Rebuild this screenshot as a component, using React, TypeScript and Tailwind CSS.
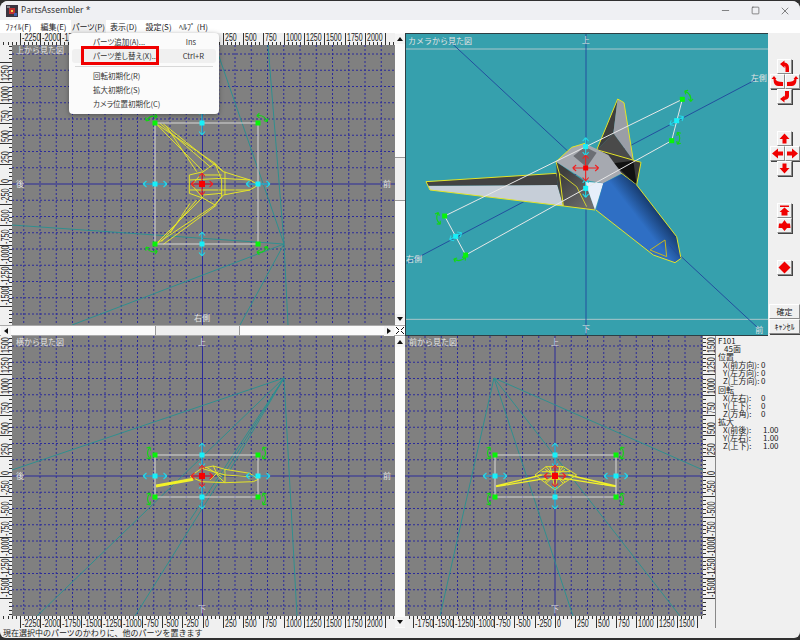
import { Minus, Square, X } from 'lucide-react';
import type { ReactNode } from 'react';

const UNIT = 0.08125; // px per model unit
const GRID = 16.25;

const LINE = '#2b2b9a';
const TEAL = '#2f8f8f';
const YELLOW = '#e4e428';

function steps(from: number, to: number, step: number) {
  const out: number[] = [];
  const start = Math.ceil(from / step);
  for (let i = start; i * step <= to; i++) out.push(i * step);
  return out;
}

function Ruler({ side, length, center }: { side: 'top' | 'bottom' | 'left' | 'right'; length: number; center: number }) {
  const horizontal = side === 'top' || side === 'bottom';
  const thick = side === 'right' ? 13 : 12;
  const list = horizontal
    ? steps(-center / UNIT, (length - center) / UNIT, 50)
    : steps(-(length - center) / UNIT, center / UNIT, 50);
  return (
    <svg width={horizontal ? length : thick} height={horizontal ? thick : length} className="block shrink-0">
      {list.map((v) => {
        const major = v % 250 === 0;
        const p = Math.round(horizontal ? center + v * UNIT : center - v * UNIT) + 0.5;
        const small = 3;
        const textLen = String(v).replace('-', '').length * 3.9 + (v < 0 ? 3 : 0);
        if (horizontal) {
          const y1 = major ? 0 : side === 'top' ? thick - small : 0;
          const y2 = major ? thick : side === 'top' ? thick : small;
          return (
            <g key={v}>
              <line x1={p} x2={p} y1={y1} y2={y2} stroke="#333" />
              {major && p + textLen + 2 < length && (
                <text
                  x={p + 1.5}
                  y={side === 'top' ? 8 : 10.5}
                  fontSize="10"
                  fill="#222"
                  textLength={textLen}
                  lengthAdjust="spacingAndGlyphs"
                  fontFamily="'Liberation Sans', sans-serif"
                >
                  {v}
                </text>
              )}
            </g>
          );
        }
        const x1 = major ? 0 : side === 'left' ? thick - small : 0;
        const x2 = major ? thick : side === 'left' ? thick : small;
        const tx = side === 'left' ? 9 : 12;
        return (
          <g key={v}>
            <line x1={x1} x2={x2} y1={p} y2={p} stroke="#333" />
            {major && p - textLen - 2 > 0 && (
              <text
                x={tx}
                y={p - 1.5}
                fontSize="10"
                fill="#222"
                textLength={textLen}
                lengthAdjust="spacingAndGlyphs"
                fontFamily="'Liberation Sans', sans-serif"
                transform={`rotate(-90 ${tx} ${p - 1.5})`}
              >
                {v}
              </text>
            )}
          </g>
        );
      })}
      {side === 'right' && <line x1={12.5} x2={12.5} y1={0} y2={length} stroke="#888" />}
    </svg>
  );
}

function Canvas({ x, y, w, h, cx, cy, children }: { x: number; y: number; w: number; h: number; cx: number; cy: number; children: ReactNode }) {
  const vs = steps(x - cx, x + w - cx, GRID).filter((v) => v !== 0);
  const hs = steps(y - cy, y + h - cy, GRID).filter((v) => v !== 0);
  return (
    <svg width={w} height={h} viewBox={`${x} ${y} ${w} ${h}`} className="block shrink-0 bg-[#808080]">
      {vs.map((v) => (
        <line key={v} x1={cx + v} x2={cx + v} y1={y} y2={y + h} stroke={LINE} strokeDasharray="2 2" />
      ))}
      {hs.map((v) => (
        <line key={v} x1={x} x2={x + w} y1={cy + v} y2={cy + v} stroke={LINE} strokeDasharray="2 2" />
      ))}
      <line x1={cx} x2={cx} y1={y} y2={y + h} stroke={LINE} />
      <line x1={x} x2={x + w} y1={cy} y2={cy} stroke={LINE} />
      {children}
    </svg>
  );
}

function Label({ x, y, children }: { x: number; y: number; children: ReactNode }) {
  return (
    <text x={x} y={y} fontSize="8" fill="#e2e2e2">
      {children}
    </text>
  );
}

function Teal({ from, to }: { from: [number, number]; to: [number, number][] }) {
  return (
    <g stroke={TEAL} fill="none">
      {to.map((p, i) => (
        <line key={i} x1={from[0]} y1={from[1]} x2={p[0]} y2={p[1]} />
      ))}
    </g>
  );
}

function DoubleArrow({ x, y, angle, color, size = 12 }: { x: number; y: number; angle: number; color: string; size?: number }) {
  return (
    <g transform={`translate(${x} ${y}) rotate(${angle})`} stroke={color} fill="none" strokeWidth="1.1">
      <path d={`M${-size} 0H${size}M${-size} 0l3.5 -3M${-size} 0l3.5 3M${size} 0l-3.5 -3M${size} 0l-3.5 3`} />
    </g>
  );
}

function Arc({ x, y, angle }: { x: number; y: number; angle: number }) {
  return (
    <g transform={`translate(${x} ${y}) rotate(${angle})`} stroke="#12d812" fill="none" strokeWidth="1.1">
      <path d="M-6 2Q0 -3 6 2M-6 2l1 -3.5M-6 2l3.5 .5M6 2l-1 -3.5M6 2l-3.5 .5" />
    </g>
  );
}

function Dot({ x, y, color, size = 5 }: { x: number; y: number; color: string; size?: number }) {
  return <rect x={x - size / 2} y={y - size / 2} width={size} height={size} fill={color} />;
}

function Gizmo({ l, r, t, b, cx, cy, vertical }: { l: number; r: number; t: number; b: number; cx: number; cy: number; vertical?: boolean }) {
  return (
    <g>
      <rect x={l} y={t} width={r - l} height={b - t} fill="none" stroke="#d8d8d8" strokeWidth="1" />
      <DoubleArrow x={l} y={cy} angle={0} color="#22d8e8" />
      <DoubleArrow x={r} y={cy} angle={0} color="#22d8e8" />
      <DoubleArrow x={cx} y={t} angle={90} color="#22d8e8" />
      <DoubleArrow x={cx} y={b} angle={90} color="#22d8e8" />
      {vertical ? (
        <>
          <Arc x={l - 7} y={t - 2} angle={-90} />
          <Arc x={l - 7} y={b + 2} angle={-90} />
          <Arc x={r + 7} y={t - 2} angle={90} />
          <Arc x={r + 7} y={b + 2} angle={90} />
        </>
      ) : (
        <>
          <Arc x={l - 4} y={t - 6} angle={-20} />
          <Arc x={r + 5} y={t - 6} angle={30} />
          <Arc x={l - 4} y={b + 7} angle={200} />
          <Arc x={r + 5} y={b + 7} angle={150} />
        </>
      )}
      <Dot x={l} y={t} color="#08f408" />
      <Dot x={r} y={t} color="#08f408" />
      <Dot x={l} y={b} color="#08f408" />
      <Dot x={r} y={b} color="#08f408" />
      <Dot x={l} y={cy} color="#18f0f8" />
      <Dot x={r} y={cy} color="#18f0f8" />
      <Dot x={cx} y={t} color="#18f0f8" />
      <Dot x={cx} y={b} color="#18f0f8" />
    </g>
  );
}

function Center({ x, y }: { x: number; y: number }) {
  return (
    <g>
      <DoubleArrow x={x} y={y} angle={0} color="#f02020" size={11} />
      <DoubleArrow x={x} y={y} angle={90} color="#f02020" size={11} />
      <Dot x={x} y={y} color="#f80000" size={6} />
    </g>
  );
}

function TopWire() {
  return (
    <g transform="translate(120 100) scale(.3333)" fill="none" stroke={YELLOW} strokeWidth="3">
      <path d="M107 70L285 190M130 72L310 215M107 70L250 215M120 70L270 200M140 80L230 215" />
      <path d="M107 433L250 290M130 433L290 315M107 433L285 315M150 400L210 310M125 425L230 300" />
      <path d="M208 225L250 215L285 190L310 215L390 240L415 255L390 270L310 285L285 315L250 295L208 280Z" />
      <path d="M285 190L305 240L305 290L285 315M210 240L305 235L390 240M210 270L305 270L390 270M315 215V285M250 215L215 255L250 295M250 225L305 225M250 285L305 280" />
    </g>
  );
}

function SideWire() {
  return (
    <g transform="translate(130 430) scale(.3333)" fill="none" stroke={YELLOW} strokeWidth="3">
      <path d="M78 170L190 150M78 166L190 146M78 168L190 148" strokeWidth="5" stroke="#f2f228" />
      <path d="M180 140L215 115L250 108L285 118L360 130L385 148L370 155L285 158L215 155Z" />
      <path d="M250 108L265 140L285 158V130L285 118M215 115L285 135L360 140M265 125L240 150M230 112L275 140" />
    </g>
  );
}

function FrontWire() {
  return (
    <g transform="translate(470 430) scale(.3333)" fill="none" stroke={YELLOW} strokeWidth="3">
      <path d="M78 168L215 135M78 170L230 145M438 168L295 135M438 170L280 145" strokeWidth="4" stroke="#f2f228" />
      <path d="M195 135L228 110L280 110L320 135L280 160L255 180L228 160Z" />
      <path d="M228 110L255 140L280 110M228 160L255 135L280 160M215 125H300M215 148H295M240 110L255 175M270 110L255 175M205 135H310M225 118L285 155M285 118L225 155" />
    </g>
  );
}

function CameraView() {
  const mark = (x: number, y: number, c: string, s = 5) => (
    <rect x={x - (s * 3) / 2} y={y - (s * 3) / 2} width={s * 3} height={s * 3} fill={c} />
  );
  const arrow = (x: number, y: number, a: number, c: string, s = 11) => (
    <g transform="scale(3)" key={`${x}-${y}-${a}`}>
      <DoubleArrow x={x / 3} y={y / 3} angle={a} color={c} size={s} />
    </g>
  );
  const arc = (x: number, y: number, a: number) => (
    <g transform="scale(3)" key={`a${x}-${y}`}>
      <Arc x={x / 3} y={y / 3} angle={a} />
    </g>
  );
  return (
    <svg width={362} height={301} viewBox="18 12 1086 903" className="block bg-[#36a0ad]">
      <defs>
        <linearGradient id="nose" gradientUnits="userSpaceOnUse" x1="640" y1="610" x2="775" y2="505">
          <stop offset="0" stopColor="#2f6fc4" />
          <stop offset="0.5" stopColor="#2f6fc4" />
          <stop offset="1" stopColor="#0c2448" />
        </linearGradient>
        <linearGradient id="side" gradientUnits="userSpaceOnUse" x1="480" y1="440" x2="570" y2="530">
          <stop offset="0" stopColor="#3e3e3e" />
          <stop offset="1" stopColor="#6e6e6e" />
        </linearGradient>
      </defs>
      <line x1="18" x2="1104" y1="57" y2="57" stroke="#a9c6cb" strokeWidth="3" />
      <line x1="18" x2="1104" y1="868" y2="868" stroke="#a9c6cb" strokeWidth="3" />
      <g stroke="#234f9e" strokeWidth="3" fill="none">
        <line x1="558" y1="12" x2="558" y2="915" />
        <line x1="145" y1="30" x2="1075" y2="895" />
        <line x1="20" y1="700" x2="1065" y2="150" />
      </g>
      {/* tail fin */}
      <path d="M653 207L640 310L590 360Z" fill="#3e3e3e" />
      <path d="M653 207L672 218L700 392L640 310Z" fill="#9a9ea6" />
      <path d="M640 310L700 392L590 360Z" fill="#4a4a4a" />
      <path d="M590 360L653 207L672 218L700 392" fill="none" stroke={YELLOW} strokeWidth="3" />
      {/* small fin */}
      <path d="M565 352L723 397L710 465L625 400Z" fill="#3b3b3b" />
      <path d="M640 400L700 392L710 465Z" fill="#111" />
      <path d="M565 352L723 397L710 465L625 400Z" fill="none" stroke={YELLOW} strokeWidth="3" />
      {/* wing */}
      <path d="M85 467L472 465L490 528L90 480Z" fill="#c6ced8" />
      <path d="M78 455L470 430L472 465L85 467Z" fill="#424242" />
      <path d="M78 455L470 430L490 528L90 480Z" fill="none" stroke={YELLOW} strokeWidth="3" />
      {/* body side */}
      <path d="M468 395L555 455L585 540L490 528L472 465Z" fill="url(#side)" />
      <path d="M478 430L530 470L560 530" fill="none" stroke={YELLOW} strokeWidth="2.5" />
      {/* roof */}
      <path d="M468 395L515 352L555 340L625 375L665 430L610 460L555 450Z" fill="#a6a9b0" />
      <path d="M520 378L555 350L590 368L560 412Z" fill="#6c6e74" />
      {/* windshield */}
      <path d="M555 455L610 460L585 540Z" fill="#e6eefa" />
      {/* nose */}
      <path d="M610 460L665 432L710 465L830 620L843 685L825 698L760 675L588 540Z" fill="url(#nose)" />
      <path d="M710 465L830 620L843 685L825 698L760 675L588 540" fill="none" stroke={YELLOW} strokeWidth="3" />
      <path d="M468 395L515 352L555 340" fill="none" stroke={YELLOW} strokeWidth="3" />
      <path d="M468 395L478 430L490 528L585 540" fill="none" stroke={YELLOW} strokeWidth="3" />
      <path d="M750 660L795 630L800 680Z" fill="none" stroke="#c8b820" strokeWidth="3" />
      <line x1="808" y1="645" x2="843" y2="685" stroke="#234f9e" strokeWidth="3" />
      {/* handle frame */}
      <g stroke="#e8e8e8" strokeWidth="3" fill="none">
        <path d="M134 558L847 208L815 332L197 675Z" />
      </g>
      {arrow(167, 619, -30, '#22d8e8', 7)}
      {arrow(830, 272, -30, '#22d8e8', 8)}
      {arrow(557, 350, 90, '#22d8e8', 9)}
      {arrow(557, 475, 90, '#22d8e8', 9)}
      {arc(112, 566, -100)}
      {arc(180, 690, 170)}
      {arc(868, 196, 60)}
      {arc(838, 325, 90)}
      {mark(134, 558, '#08f408')}
      {mark(847, 208, '#08f408')}
      {mark(815, 332, '#08f408')}
      {mark(197, 675, '#08f408')}
      {mark(167, 619, '#18f0f8')}
      {mark(830, 272, '#18f0f8')}
      {mark(557, 350, '#18f0f8')}
      {mark(557, 475, '#18f0f8')}
      {arrow(557, 414, 0, '#f02020', 13)}
      {arrow(557, 414, 90, '#f02020', 13)}
      {mark(557, 414, '#f80000')}
      <g fontSize="24" fill="#e4e4e4">
        <text x="24" y="41">カメラから見た図</text>
        <text x="545" y="38">上</text>
        <text x="1052" y="153">左側</text>
        <text x="18" y="696">右側</text>
        <text x="546" y="906">下</text>
        <text x="1066" y="908">前</text>
      </g>
    </svg>
  );
}

const btnBase = 'relative flex items-center justify-center border border-t-white border-l-white border-r-[#8a8a8a] border-b-[#8a8a8a] bg-[#f0f0f0] shadow-[1px_1px_0_#444]';

function ArrowBtn({ d }: { d: string }) {
  return (
    <button className={`${btnBase} h-[15px] w-[15px]`}>
      <svg width="13" height="13" viewBox="0 0 13 13" className="shrink-0">
        <path d={d} fill="#f00000" />
      </svg>
    </button>
  );
}

function Sidebar() {
  return (
    <div className="flex w-[33px] flex-col items-center bg-[#f0f0f0] pl-px">
      <div className="mt-[26px] flex flex-col items-center">
        <ArrowBtn d="M2 4L6.5 .5V2.5Q11 3 11 8V12H7.5V8Q7.5 6 6.5 6V8Z" />
        <div className="flex">
          <ArrowBtn d="M.5 4L3 1L5.5 4H4.5Q5 7 12 7V11H7Q2.5 11 2.5 4Z" />
          <ArrowBtn d="M12.5 4L10 1L7.5 4H8.5Q8 7 1 7V11H6Q10.5 11 10.5 4Z" />
        </div>
        <ArrowBtn d="M7 1H11V6Q11 9.5 6.5 10V12.5L2 9L6.5 5.5V7Q7 7 7 5Z" />
      </div>
      <div className="mt-[27px] flex flex-col items-center">
        <ArrowBtn d="M6.5 1.5L11.5 7H8.5V11.5H4.5V7H1.5Z" />
        <div className="flex">
          <ArrowBtn d="M1 6.5L7 1.5V4.5H12V8.5H7V11.5Z" />
          <ArrowBtn d="M12 6.5L6 1.5V4.5H1V8.5H6V11.5Z" />
        </div>
        <ArrowBtn d="M6.5 11.5L11.5 6H8.5V1.5H4.5V6H1.5Z" />
      </div>
      <div className="mt-[27px] flex flex-col items-center">
        <ArrowBtn d="M2 1.5H11V3H2ZM6.5 3.5L11.5 8H9.5V11.5H3.5V8H1.5Z" />
        <ArrowBtn d="M6.5 1L9 4.5H12L12.5 9H9L6.5 12L4 9H.5L1 4.5H4Z" />
      </div>
      <div className="mt-[27px]">
        <ArrowBtn d="M6.5 .5L12.5 6.5L6.5 12.5L.5 6.5Z" />
      </div>
      <div className="mt-auto mb-[2px] flex flex-col">
        <button className={`${btnBase} h-[15px] w-[31px] text-[8px] leading-[13px] text-[#222]`}>確定</button>
        <button className={`${btnBase} h-[15px] w-[31px] text-[8px] leading-[13px] text-[#222]`}>ｷｬﾝｾﾙ</button>
      </div>
    </div>
  );
}

function ScrollArrow({ dir, className }: { dir: 'up' | 'down' | 'left' | 'right'; className?: string }) {
  const d = { up: 'M5 3L8 7H2Z', down: 'M5 7L8 3H2Z', left: 'M3 5L7 2V8Z', right: 'M7 5L3 2V8Z' }[dir];
  return (
    <svg width="10" height="10" viewBox="0 0 10 10" className={`block shrink-0 bg-[#f4f4f4] ${className ?? ''}`}>
      <path d={d} fill="#111" />
    </svg>
  );
}

function VScroll({ thumb }: { thumb?: boolean }) {
  return (
    <div className="flex w-[10px] shrink-0 flex-col bg-[#fbfbfb]">
      <div className="h-px" />
      <ScrollArrow dir="up" />
      {thumb && <div className="mt-[113px] h-[44px] border-y border-[#999] bg-[#efefef]" />}
      <div className="flex-1" />
      <ScrollArrow dir="down" className="mb-px" />
    </div>
  );
}

const props = [
  ['F101', '', 'pl-0'],
  ['45面', '', 'pl-[6px]'],
  ['位置', '', 'pl-0'],
  ['X(前方向):', '0', 'pl-[5px]'],
  ['Y(左方向):', '0', 'pl-[5px]'],
  ['Z(上方向):', '0', 'pl-[5px]'],
  ['回転', '', 'pl-0'],
  ['X(左右):', '0', 'pl-[5px]'],
  ['Y(上下):', '0', 'pl-[5px]'],
  ['Z(方角):', '0', 'pl-[5px]'],
  ['拡大', '', 'pl-0'],
  ['X(前後):', '1.00', 'pl-[5px]'],
  ['Y(左右):', '1.00', 'pl-[5px]'],
  ['Z(上下):', '1.00', 'pl-[5px]'],
];

const menus = ['ﾌｧｲﾙ(F)', '編集(E)', 'パーツ(P)', '表示(D)', '設定(S)', 'ﾍﾙﾌﾟ (H)'];

export default function App() {
  return (
    <div className="h-[640px] w-[800px] overflow-hidden bg-[#303030] pt-px font-['Noto_Sans_CJK_JP','Noto_Sans',sans-serif]">
      <div className="relative flex h-[637px] flex-col overflow-hidden rounded-t-lg rounded-b-md bg-[#f0f0f0]">
        {/* title bar */}
        <div className="flex h-[19px] items-center bg-[#eff0f3] pl-[6px]">
          <svg width="12" height="12" viewBox="0 0 12 12" className="mr-[3px]">
            <rect width="12" height="12" fill="#3a3440" />
            <rect x="3" y="3" width="6" height="6" fill="#c03030" />
            <rect x="1" y="1" width="3" height="2" fill="#8a8a90" />
            <rect x="8" y="8" width="3" height="3" fill="#4060b0" />
            <rect x="5" y="5" width="2" height="2" fill="#f0d040" />
          </svg>
          <span className="font-['Noto_Sans',sans-serif] text-[8.5px] text-[#333]">PartsAssembler *</span>
          <div className="ml-auto flex items-center text-[#444]">
            <div className="flex w-[29px] justify-center"><Minus size={11} strokeWidth={1.4} /></div>
            <div className="flex w-[30px] justify-center"><Square size={9} strokeWidth={1.6} /></div>
            <div className="flex w-[30px] justify-center pr-[1px]"><X size={12} strokeWidth={1.3} /></div>
          </div>
        </div>
        {/* menu bar */}
        <div className="flex h-[13px] items-center bg-white pl-[1px] [font-feature-settings:'palt']">
          {menus.map((m, i) => (
            <div
              key={m}
              className={`flex h-full w-[35px] items-center justify-center text-[8px] text-[#222] ${i === 2 ? 'bg-[#f0f0f0]' : ''}`}
            >
              {m}
            </div>
          ))}
        </div>

        {/* top row */}
        <div className="flex h-[303px]">
          <div className="flex w-[405px] flex-col">
            <div className="flex h-[292px]">
              <div className="flex flex-col">
                <Ruler side="top" length={395} center={202.5} />
                <div className="flex">
                  <Ruler side="left" length={280} center={139} />
                  <Canvas x={12} y={45} w={383} h={280} cx={202.5} cy={184}>
                    <Teal from={[284, 244]} to={[[12, 225], [72, 325], [215, 45], [268, 45], [240, 325], [288, 325]]} />
                    <TopWire />
                    <Gizmo l={155} r={258} t={123} b={244} cx={202} cy={184} />
                    <Center x={202} y={184} />
                    <Label x={16} y={53}>上から見た図</Label>
                    <Label x={194} y={321}>右側</Label>
                    <Label x={383} y={187}>前</Label>
                    <Label x={16} y={187}>後</Label>
                  </Canvas>
                </div>
              </div>
              <VScroll thumb />
            </div>
            <div className="flex h-[11px] border-y border-[#aaa] bg-[#fbfbfb]">
              <ScrollArrow dir="left" className="ml-px" />
              <div className="ml-[144px] h-full w-[85px] border-x border-[#999] bg-[#efefef]" />
              <div className="flex-1" />
              <ScrollArrow dir="right" />
              <svg width="10" height="9" viewBox="0 0 10 9" className="ml-[1px] block shrink-0 bg-white">
                <path d="M1 1L4 4M9 1L6 4M1 8L4 5M9 8L6 5" stroke="#111" />
              </svg>
            </div>
          </div>
          <div className="flex flex-col border-l border-[#2d3f44]">
            <div className="border-y border-[#2d3f44]">
              <CameraView />
            </div>
          </div>
          <Sidebar />
        </div>

        {/* bottom row */}
        <div className="flex h-[292px]">
          <div className="flex w-[405px]">
            <div className="flex flex-col">
              <div className="flex">
                <Ruler side="left" length={280} center={140} />
                <Canvas x={12} y={336} w={383} h={280} cx={202.5} cy={476}>
                  <Teal from={[284, 378]} to={[[12, 470], [37, 616], [135, 616], [190, 520], [230, 470], [297, 616]]} />
                  <SideWire />
                  <Gizmo l={155} r={258} t={455} b={497} cx={202} cy={476} vertical />
                  <Center x={202} y={476} />
                  <Label x={16} y={345}>横から見た図</Label>
                  <Label x={198} y={345}>上</Label>
                  <Label x={198} y={612}>下</Label>
                  <Label x={383} y={479}>前</Label>
                  <Label x={16} y={479}>後</Label>
                </Canvas>
              </div>
              <Ruler side="bottom" length={395} center={202.5} />
            </div>
            <VScroll />
          </div>
          <div className="flex flex-col">
            <div className="flex">
              <Canvas x={405} y={336} w={298} h={280} cx={555} cy={476}>
                <Teal from={[494, 378]} to={[[440, 616], [573, 616], [680, 616], [703, 470]]} />
                <FrontWire />
                <Gizmo l={495} r={616} t={455} b={497} cx={555} cy={476} vertical />
                <Center x={555} y={476} />
                <Label x={409} y={345}>前から見た図</Label>
                <Label x={551} y={345}>上</Label>
                <Label x={551} y={612}>下</Label>
              </Canvas>
              <Ruler side="right" length={280} center={140} />
            </div>
            <div className="flex">
              <Ruler side="bottom" length={298} center={150} />
              <div className="w-[13px] border-r border-[#888]" />
            </div>
          </div>
          <div className="flex-1 pt-[1px] pl-[2px] text-[8px] leading-[8.1px] text-[#222]">
            {props.map(([label, value, pad], i) => (
              <div key={i} className={`flex h-[8.1px] items-center whitespace-nowrap ${pad}`}>
                <span>{label}</span>
                {value && <span className={`absolute ${value === '0' ? 'left-[761px]' : 'left-[763px]'}`}>{value}</span>}
              </div>
            ))}
          </div>
        </div>

        {/* status bar */}
        <div className="flex h-[10px] items-center pl-[3px] text-[8px] text-[#222]">
          現在選択中のパーツのかわりに、他のパーツを置きます
        </div>

        {/* open menu */}
        <div className="absolute top-[32px] left-[69px] h-[81px] w-[150px] rounded-[4px] bg-[#fbfbfb] pt-[2px] shadow-[0_1px_5px_rgba(0,0,0,0.35)] [font-feature-settings:'palt']">
          <div className="flex h-[14px] items-center justify-between pr-[23px] pl-[24px] text-[7.5px] text-[#333]">
            <span>パーツ追加(A)...</span>
            <span>Ins</span>
          </div>
          <div className="relative mx-[3px] flex h-[14px] items-center justify-between rounded-[3px] bg-[#f0f0f0] pr-[12px] pl-[21px] text-[7.5px] text-[#333]">
            <span>パーツ差し替え(X)...</span>
            <span>Ctrl+R</span>
            <div className="absolute top-[-3px] left-[9px] h-[19px] w-[78px] border-[3px] border-[#f00000]" />
          </div>
          <div className="mx-[6px] mt-[3px] mb-[2px] h-px bg-[#d8d8d8]" />
          {['回転初期化(R)', '拡大初期化(S)', 'カメラ位置初期化(C)'].map((t) => (
            <div key={t} className="flex h-[14px] items-center pl-[24px] text-[7.5px] text-[#333]">
              {t}
            </div>
          ))}
        </div>
      </div>
    </div>
  );
}
